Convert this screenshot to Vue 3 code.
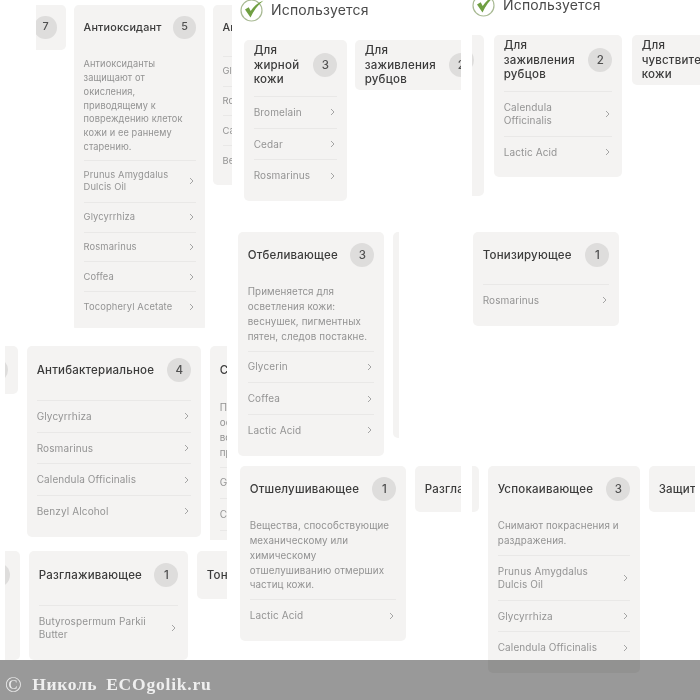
<template>
  <div class="page">
    <section v-for="f in fragments" :key="f.id" class="frag" :class="f.id">
      <div v-if="f.used" class="used">
        <svg class="used-icon" viewBox="0 0 24 24" width="24" height="24">
          <circle cx="11.500" cy="12.500" r="10.500" fill="none" stroke="#a9ba94" stroke-width="1.2" />
          <path d="M5 11.500l5.500 8C13.500 13 17.500 7.200 23.500 2.500 17.500 5 13.300 8.800 10.700 13L8.700 9.200z" fill="#709f42" />
        </svg>
        <span>Используется</span>
      </div>
      <div class="cards">
        <article
          v-for="c in f.cards"
          :key="c.key"
          class="card"
          :style="{ width: c.w + 'px', marginLeft: (c.ml || 0) + 'px', height: c.h ? c.h + 'px' : null }"
        >
          <header class="head">
            <h3>{{ c.title }}</h3>
            <b v-if="c.n">{{ c.n }}</b>
          </header>
          <p v-if="c.desc" class="desc">{{ c.desc }}</p>
          <ul v-if="c.items" :class="{ tight: !c.desc }">
            <li v-for="it in c.items" :key="it">
              <span>{{ it }}</span>
              <svg viewBox="0 0 5 8" width="5" height="8">
                <path d="M1 1l3 3-3 3" fill="none" stroke="#9c9c9c" stroke-width="0.9" />
              </svg>
            </li>
          </ul>
        </article>
      </div>
    </section>

    <div class="mark">
      <span class="copy">©</span>
      <span>Николь</span>
      <span class="site">ECOgolik.ru</span>
    </div>
  </div>
</template>

<script setup>
const fragments = [
  {
    id: 'f1',
    cards: [
      { key: 'a', w: 120, ml: -90, title: '', n: 7 },
      {
        key: 'b', w: 130.5, title: 'Антиоксидант', n: 5,
        desc: 'Антиоксиданты\nзащищают от\nокисления,\nприводящему к\nповреждению клеток\nкожи и ее раннему\nстарению.',
        items: ['Prunus Amygdalus\nDulcis Oil', 'Glycyrrhiza', 'Rosmarinus', 'Coffea', 'Tocopheryl Acetate']
      },
      {
        key: 'c', w: 180, title: 'Антибактериальное', n: 4,
        items: ['Glycyrrhiza', 'Rosmarinus', 'Calendula Officinalis', 'Benzyl Alcohol']
      }
    ]
  },
  {
    id: 'f2', used: true,
    cards: [
      { key: 'a', w: 103, title: 'Для\nжирной\nкожи', n: 3, items: ['Bromelain', 'Cedar', 'Rosmarinus'] },
      { key: 'b', w: 128, title: 'Для\nзаживления\nрубцов', n: 2 }
    ]
  },
  {
    id: 'f3', used: true,
    cards: [
      { key: 'a', w: 100, ml: -88, title: '', n: 3, h: 161 },
      { key: 'b', w: 128, title: 'Для\nзаживления\nрубцов', n: 2, items: ['Calendula\nOfficinalis', 'Lactic Acid'] },
      { key: 'c', w: 150, title: 'Для\nчувствительной\nкожи', n: 1 }
    ]
  },
  {
    id: 'f4',
    cards: [{ key: 'a', w: 146, title: 'Тонизирующее', n: 1, items: ['Rosmarinus'] }]
  },
  {
    id: 'f5',
    cards: [
      {
        key: 'a', w: 146, title: 'Отбеливающее', n: 3,
        desc: 'Применяется для\nосветления кожи:\nвеснушек, пигментных\nпятен, следов постакне.',
        items: ['Glycerin', 'Coffea', 'Lactic Acid']
      },
      { key: 'b', w: 60, title: '', h: 206 }
    ]
  },
  {
    id: 'f6',
    cards: [
      {
        key: 'a', w: 166, title: 'Отшелушивающее', n: 1,
        desc: 'Вещества, способствующие\nмеханическому или\nхимическому\nотшелушиванию отмерших\nчастиц кожи.',
        items: ['Lactic Acid']
      },
      { key: 'b', w: 150, title: 'Разглаживающее', n: 1 }
    ]
  },
  {
    id: 'f7',
    cards: [
      { key: 'a', w: 100, ml: -93, title: '' },
      {
        key: 'b', w: 152, title: 'Успокаивающее', n: 3,
        desc: 'Снимают покраснения и\nраздражения.',
        items: ['Prunus Amygdalus\nDulcis Oil', 'Glycyrrhiza', 'Calendula Officinalis']
      },
      { key: 'c', w: 120, title: 'Защитное', n: 2 }
    ]
  },
  {
    id: 'f8',
    cards: [
      { key: 'a', w: 100, ml: -87, title: '', n: 7 },
      {
        key: 'b', w: 174, title: 'Антибактериальное', n: 4,
        items: ['Glycyrrhiza', 'Rosmarinus', 'Calendula Officinalis', 'Benzyl Alcohol']
      },
      {
        key: 'c', w: 150, title: 'Смягчающее', n: 2,
        desc: 'Питают и\nосвежают кожу,\nвосстанавливают\nпри сухости.',
        items: ['Glycerin', 'Coffea', 'Cedar']
      }
    ]
  },
  {
    id: 'f9',
    cards: [
      { key: 'a', w: 100, ml: -85, title: '', n: 1, h: 109 },
      { key: 'b', w: 159, title: 'Разглаживающее', n: 1, items: ['Butyrospermum Parkii\nButter'] },
      { key: 'c', w: 146, title: 'Тонизирующее', n: 1 }
    ]
  }
]
</script>

<style scoped>
.page {
  position: relative;
  width: 700px;
  height: 700px;
  overflow: hidden;
  background: #fff;
  font-family: Inter, "Noto Sans", sans-serif;
}
.frag {
  --u: 1px;
  --head: 46;
  position: absolute;
  overflow: hidden;
  filter: blur(0.45px);
  will-change: transform;
}
.f1 { left: 36px; top: 5px; width: 196px; height: 323px; --u: 0.94px; --head: 48; }
.f2 { left: 236px; top: -2px; width: 225px; height: 206px; padding-left: 8px; box-sizing: border-box; --head: 50; }
.f3 { left: 472px; top: -7px; width: 228px; height: 210px; --head: 50; }
.f4 { left: 473px; top: 232px; width: 146px; height: 100px; }
.f5 { left: 238px; top: 232px; width: 161px; height: 226px; }
.f6 { left: 240px; top: 466px; width: 221px; height: 180px; }
.f7 { left: 472px; top: 466px; width: 223px; height: 210px; }
.f8 { left: 5px; top: 346px; width: 222px; height: 194px; --head: 48; }
.f9 { left: 5px; top: 551px; width: 222px; height: 112px; --head: 48; }

.used {
  display: flex;
  align-items: center;
  gap: 7px;
  height: 23px;
  margin-bottom: 19px;
  color: #4a4a4a;
  font-size: 14px;
  letter-spacing: 0.012em;
}
.f2 .used { margin-left: -4px; }
.used-icon { flex: none; }

.cards {
  display: flex;
  align-items: flex-start;
  gap: calc(9 * var(--u));
}
.f2 .cards { gap: 8px; }
.f3 .cards { gap: 10px; }
.f3 .card + .card + .card { margin-left: -1px; }

.card {
  flex: none;
  box-sizing: border-box;
  padding: 0 calc(9.7 * var(--u));
  background: #f4f3f2;
  border-radius: calc(5 * var(--u));
}
.head {
  display: flex;
  align-items: center;
  justify-content: space-between;
  gap: 8px;
  min-height: calc(var(--head) * var(--u));
}
.head h3 {
  margin: 0;
  color: #3b3b3b;
  font-size: calc(11.5 * var(--u));
  font-weight: 500;
  line-height: calc(14.7 * var(--u));
  letter-spacing: 0.018em;
  white-space: pre;
}
.head b {
  flex: none;
  width: calc(24 * var(--u));
  height: calc(24 * var(--u));
  margin-left: auto;
  border-radius: 50%;
  background: #dedddc;
  color: #505050;
  font-size: calc(11.5 * var(--u));
  font-weight: 500;
  line-height: calc(24 * var(--u));
  text-align: center;
}
.desc {
  margin: calc(7.4 * var(--u)) 0 calc(6.3 * var(--u));
  color: #929292;
  font-size: calc(9.8 * var(--u));
  line-height: calc(14.7 * var(--u));
  letter-spacing: 0.012em;
  white-space: pre;
}
ul {
  margin: 0;
  padding: 0 0 calc(10 * var(--u));
  list-style: none;
}
ul.tight { margin-top: calc(6 * var(--u)); }
li {
  display: flex;
  align-items: center;
  justify-content: space-between;
  padding: calc(8.85 * var(--u)) 0;
  border-top: 1px solid #e9e8e7;
  color: #949494;
  font-size: calc(10 * var(--u));
  line-height: calc(13 * var(--u));
  letter-spacing: 0.012em;
  white-space: pre;
}
li svg {
  flex: none;
  margin-right: 2px;
}

.mark {
  position: absolute;
  left: 0;
  right: 0;
  bottom: 0;
  box-sizing: border-box;
  display: flex;
  align-items: center;
  gap: 9px;
  height: 40px;
  padding: 9px 0 0 5px;
  background: rgba(0, 0, 0, 0.4);
  color: #efefef;
  font-family: "Liberation Serif", serif;
  font-size: 17.5px;
  font-weight: 700;
  letter-spacing: 0.035em;
}
.site { letter-spacing: 0.045em; }
.copy {
  font-size: 22px;
  font-weight: 400;
  margin-right: 1px;
}
</style>
